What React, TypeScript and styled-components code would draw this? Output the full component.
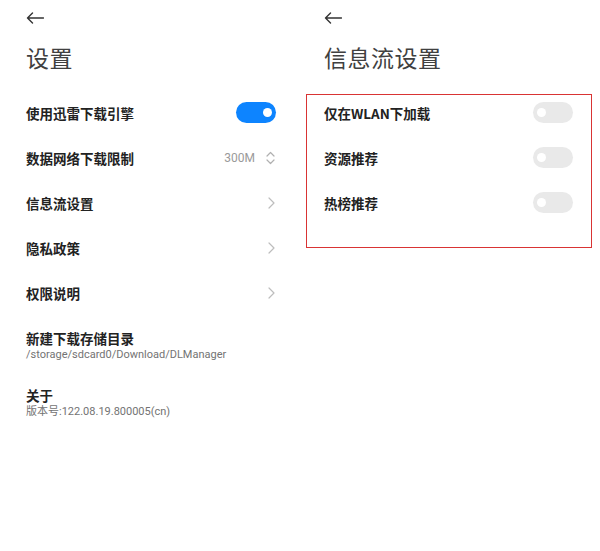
import React from "react";
import styled, { createGlobalStyle } from "styled-components";

const Global = createGlobalStyle`
  html, body { margin: 0; padding: 0; background: #ffffff; }
  body { font-family: "Noto Sans CJK SC", "Noto Sans", sans-serif; }
`;

const Page = styled.div`
  width: 600px;
  height: 551px;
  display: flex;
  background: #fff;
`;

const Panel = styled.div<{ $pl: number; $pr: number }>`
  width: 300px;
  box-sizing: border-box;
  padding: 0 ${(p) => p.$pr}px 0 ${(p) => p.$pl}px;
  display: flex;
  flex-direction: column;
`;

const BackBar = styled.div`
  height: 36px;
  display: flex;
  align-items: center;
  color: #333;
`;

const Title = styled.h1`
  margin: 0 0 12px;
  height: 42px;
  line-height: 42px;
  font-size: 23px;
  font-weight: 400;
  color: #404040;
  letter-spacing: 0.5px;
`;

const List = styled.div`
  position: relative;
  display: flex;
  flex-direction: column;
`;

const Row = styled.div`
  height: 45px;
  display: flex;
  align-items: center;
  justify-content: space-between;
`;

const Label = styled.span`
  font-size: 13.5px;
  font-weight: 700;
  color: #222;
`;

const Trail = styled.span`
  display: flex;
  align-items: center;
  gap: 11px;
  color: #9a9a9a;
  font-family: Roboto, "Noto Sans", sans-serif;
  font-size: 12px;
  padding-right: 1px;
`;

const Switch = styled.span<{ $on: boolean }>`
  width: 40px;
  height: 21px;
  border-radius: 11px;
  background: ${(p) => (p.$on ? "#0d84ff" : "#e9e9e9")};
  display: flex;
  align-items: center;
  justify-content: ${(p) => (p.$on ? "flex-end" : "flex-start")};
  padding: 0 4px;
  box-sizing: border-box;
  &::after {
    content: "";
    width: 9px;
    height: 9px;
    border-radius: 50%;
    background: #fff;
  }
`;

const Block = styled.div`
  padding: 14px 0 10px;
  display: flex;
  flex-direction: column;
`;

const BlockTitle = styled.span`
  font-size: 13.5px;
  line-height: 18px;
  font-weight: 700;
  color: #222;
`;

const Sub = styled.span`
  font-family: Roboto, "Noto Sans CJK SC", sans-serif;
  font-size: 11px;
  line-height: 15px;
  color: #737373;
`;

const Highlight = styled.div`
  position: absolute;
  left: -18px;
  right: -19px;
  top: 4px;
  height: 152px;
  border: 1.5px solid #d93434;
  pointer-events: none;
`;

const BackArrow = () => (
  <svg width="18" height="12" viewBox="0 0 18 12" fill="none" stroke="currentColor" strokeWidth="1.4">
    <path d="M1.5 6H17.5M6.5 1L1.5 6L6.5 11" strokeLinecap="round" strokeLinejoin="round" />
  </svg>
);

const Chevron = () => (
  <svg width="7" height="12" viewBox="0 0 7 12" fill="none" stroke="#bdbdbd" strokeWidth="1.2">
    <path d="M1 1L6 6L1 11" strokeLinecap="round" strokeLinejoin="round" />
  </svg>
);

const UpDown = () => (
  <svg width="9" height="14" viewBox="0 0 9 14" fill="none" stroke="#b0b0b0" strokeWidth="1.2">
    <path d="M1 5L4.5 1.5L8 5M1 9L4.5 12.5L8 9" strokeLinecap="round" strokeLinejoin="round" />
  </svg>
);

export default function App() {
  return (
    <>
      <Global />
      <Page>
        <Panel $pl={26} $pr={24}>
          <BackBar>
            <BackArrow />
          </BackBar>
          <Title>设置</Title>
          <List>
            <Row>
              <Label>使用迅雷下载引擎</Label>
              <Switch $on />
            </Row>
            <Row>
              <Label>数据网络下载限制</Label>
              <Trail>
                300M
                <UpDown />
              </Trail>
            </Row>
            <Row>
              <Label>信息流设置</Label>
              <Trail>
                <Chevron />
              </Trail>
            </Row>
            <Row>
              <Label>隐私政策</Label>
              <Trail>
                <Chevron />
              </Trail>
            </Row>
            <Row>
              <Label>权限说明</Label>
              <Trail>
                <Chevron />
              </Trail>
            </Row>
            <Block>
              <BlockTitle>新建下载存储目录</BlockTitle>
              <Sub>/storage/sdcard0/Download/DLManager</Sub>
            </Block>
            <Block>
              <BlockTitle>关于</BlockTitle>
              <Sub>版本号:122.08.19.800005(cn)</Sub>
            </Block>
          </List>
        </Panel>
        <Panel $pl={24} $pr={27}>
          <BackBar>
            <BackArrow />
          </BackBar>
          <Title>信息流设置</Title>
          <List>
            <Row>
              <Label>仅在WLAN下加载</Label>
              <Switch $on={false} />
            </Row>
            <Row>
              <Label>资源推荐</Label>
              <Switch $on={false} />
            </Row>
            <Row>
              <Label>热榜推荐</Label>
              <Switch $on={false} />
            </Row>
            <Highlight />
          </List>
        </Panel>
      </Page>
    </>
  );
}
